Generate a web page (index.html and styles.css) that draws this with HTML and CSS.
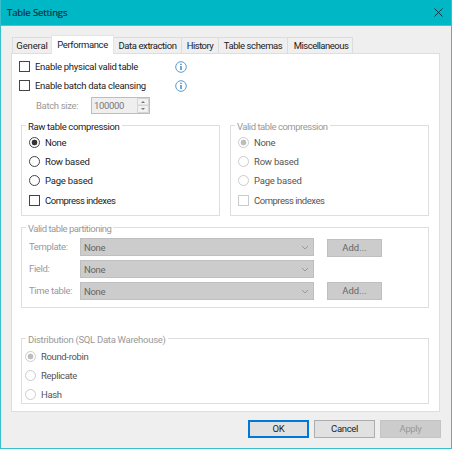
FILE: index.html
```html
<!DOCTYPE html>
<html lang="en">
<head>
<meta charset="utf-8">
<title>Table Settings</title>
<link rel="stylesheet" href="styles.css">
</head>
<body>
<main class="window">
  <header class="titlebar">
    <h1>Table Settings</h1>
    <svg class="close" viewBox="0 0 9 9"><path d="M.5.5l8 8M8.5.5l-8 8"/></svg>
  </header>
  <nav class="tabs">
    <span class="tab general"><b>General</b></span>
    <span class="tab active"><b>Performance</b></span>
    <span class="tab extraction"><b>Data extraction</b></span>
    <span class="tab history"><b>History</b></span>
    <span class="tab schemas"><b>Table schemas</b></span>
    <span class="tab misc"><b>Miscellaneous</b></span>
  </nav>
  <section class="panel">
    <div class="row top"><i class="check"></i><span class="label">Enable physical valid table</span>
      <svg class="info" viewBox="0 0 12 12"><circle cx="6" cy="6" r="5.3"/><path d="M6 5v4M6 2.7v1.3"/></svg></div>
    <div class="row top"><i class="check"></i><span class="label">Enable batch data cleansing</span>
      <svg class="info" viewBox="0 0 12 12"><circle cx="6" cy="6" r="5.3"/><path d="M6 5v4M6 2.7v1.3"/></svg></div>
    <div class="batch"><span class="muted size-label">Batch size:</span>
      <div class="spinner"><span>100000</span>
        <svg viewBox="0 0 12 15"><path class="key" d="M.5.5h11v6.5H.5zM.5 7.5h11v7H.5z"/><path class="arrow" d="M4 5l2-2 2 2zM4 10l2 2 2-2z"/></svg></div></div>
    <div class="pair">
      <section class="group compression">
        <h2>Raw table compression</h2>
        <div class="row"><i class="radio on"></i><span>None</span></div>
        <div class="row"><i class="radio"></i><span class="loose">Row based</span></div>
        <div class="row"><i class="radio"></i><span class="loose">Page based</span></div>
        <div class="row last"><i class="check"></i><span class="tight">Compress indexes</span></div>
      </section>
      <section class="group compression disabled">
        <h2 class="tight">Valid table compression</h2>
        <div class="row"><i class="radio on"></i><span>None</span></div>
        <div class="row"><i class="radio"></i><span class="loose">Row based</span></div>
        <div class="row"><i class="radio"></i><span class="loose">Page based</span></div>
        <div class="row last"><i class="check"></i><span class="tight">Compress indexes</span></div>
      </section>
    </div>
    <section class="group partition disabled">
      <h2 class="tight">Valid table partitioning</h2>
      <div class="field"><span class="muted">Template:</span><div class="combo"><span>None</span><svg viewBox="0 0 8 5"><path d="M1 1l3 3 3-3"/></svg></div><div class="button add">Add...</div></div>
      <div class="field"><span class="muted">Field:</span><div class="combo"><span>None</span><svg viewBox="0 0 8 5"><path d="M1 1l3 3 3-3"/></svg></div></div>
      <div class="field"><span class="muted">Time table:</span><div class="combo"><span>None</span><svg viewBox="0 0 8 5"><path d="M1 1l3 3 3-3"/></svg></div><div class="button add low">Add...</div></div>
    </section>
    <section class="group distribution disabled">
      <h2>Distribution (SQL Data Warehouse)</h2>
      <div class="row"><i class="radio on"></i><span>Round-robin</span></div>
      <div class="row"><i class="radio"></i><span>Replicate</span></div>
      <div class="row"><i class="radio"></i><span>Hash</span></div>
    </section>
  </section>
  <footer class="actions">
    <div class="button ok">OK</div>
    <div class="button">Cancel</div>
    <div class="button off">Apply</div>
  </footer>
</main>
</body>
</html>
```
FILE: styles.css
```css
* { box-sizing: border-box; }
body { margin: 0; background: #efefef; font: 9.5px/12px Roboto, "Liberation Sans", sans-serif; letter-spacing: -.35px; color: #222; white-space: nowrap; }
h1, h2 { margin: 0; font-weight: 400; }
i { display: block; flex: none; }
svg { display: block; flex: none; fill: none; }
.window { width: 452px; height: 449px; border: 1px solid #38bfcb; border-top: 0; background: #efefef; overflow: hidden; }
.titlebar { height: 26px; padding: 0 8px 0 6px; display: flex; justify-content: space-between; align-items: center; background: #00b7c6; border-bottom: 1px solid #43c6d0; }
.titlebar h1 { font: 9.5px/14px "Open Sans", "Noto Sans", sans-serif; color: #062f36; -webkit-text-stroke: .2px #062f36; letter-spacing: -.1px; }
.close { width: 9px; height: 9px; stroke: #123; stroke-width: .9; }

.tabs { display: flex; align-items: flex-end; height: 27px; padding-left: 11px; }
.tab { height: 16px; border: 1px solid #dcdcdc; border-width: 1px 1px 0 0; display: flex; justify-content: center; align-items: center; padding-top: 1px; letter-spacing: -.4px; }
.tab b { font-weight: 400; }
.general { width: 39px; border-left-width: 1px; border-right: 0; letter-spacing: -.15px; }
.active { width: 63px; height: 19px; background: #fff; margin-bottom: -1px; position: relative; border-color: #e4e4e4; border-left-width: 1px; padding-bottom: 2px; }
.extraction { width: 68px; }
.history { width: 37px; letter-spacing: -.55px; }
.schemas { width: 69px; }
.misc { width: 65px; letter-spacing: -.5px; }
.misc b { padding-left: 2px; }

.panel { margin-left: 10px; width: 429px; height: 359px; padding: 3px 9px 0 7px; background: #fff; border: 1px solid #dedede; }
.row { height: 19px; display: flex; align-items: center; }
.check { width: 11px; height: 11px; border: 1px solid #444; background: #fff; }
.radio { width: 11px; height: 11px; border: 1px solid #444; border-radius: 50%; background: #fff; }
.radio.on { background: radial-gradient(circle, #333 0 2.6px, #fff 3.2px); }
.tight { letter-spacing: -.48px; }
.loose { letter-spacing: -.2px; }
.label { width: 140px; margin-left: 5px; letter-spacing: -.29px; }
.info { width: 12px; height: 12px; stroke: #5b9bcb; stroke-width: 1; }
.info path { stroke: #2878b5; stroke-width: 1.3; }
.muted { color: #999; }
.batch { display: flex; height: 17px; margin-top: 2px; align-items: center; padding-left: 17px; }
.size-label { width: 55px; }
.spinner { width: 59px; height: 17px; border: 1px solid #bdbdbd; background: #efefef; color: #777; display: flex; justify-content: space-between; align-items: center; padding-left: 2px; }
.spinner svg { width: 12px; height: 15px; }
.key { stroke: #d4d4d4; fill: #f1f1f1; }
.arrow { fill: #777; }

.pair { display: flex; gap: 10px; padding: 11px 0 0 2px; }
.group { border: 1px solid #dedede; }
.group h2 { width: max-content; height: 12px; margin: -6px 0 0 4px; padding: 0 2px; background: #fff; font-size: 9.5px; line-height: 13px; }
.compression { width: 199px; height: 91px; }
.compression .row { padding-left: 7px; gap: 5px; }
.compression h2 + .row { margin-top: 1px; }
.compression .last { height: 21px; }
.disabled h2 { color: #999; }
.disabled .row { color: #555; }
.disabled .check, .disabled .radio { border-color: #ccc; }
.disabled .radio.on { background: radial-gradient(circle, #bdbdbd 0 2.6px, #fff 3.2px); }
.partition { width: 408px; height: 81px; margin: 11px 0 0 2px; }
.partition h2 { margin-bottom: 4px; }
.field { display: flex; align-items: flex-start; height: 22px; padding-left: 7px; }
.field .muted { width: 51px; padding-top: 3px; }
.combo { width: 234px; height: 18px; padding: 1px 4px 0 3px; border: 1px solid #bfbfbf; background: #ccc; color: #666; display: flex; justify-content: space-between; align-items: center; }
.combo svg { width: 8px; height: 5px; stroke: #999; }
.button { width: 61px; height: 18px; display: flex; align-items: center; justify-content: center; border: 1px solid #adadad; background: #e1e1e1; color: #222; }
.button.add { width: 55px; margin: 1px 0 0 13px; border-color: #bfbfbf; background: #ccc; color: #666; letter-spacing: 0; }
.button.add.low { margin-top: 0; }
.distribution { width: 408px; height: 66px; margin: 30px 0 0 2px; }
.distribution h2 { letter-spacing: -.28px; }
.distribution .row { padding-left: 3px; gap: 5px; }
.distribution h2 + .row { margin-top: 2px; }

.actions { display: flex; justify-content: flex-end; gap: 5px; padding: 8px 10px 0 0; }
.button.ok { border: 2px solid #0078d7; }
.button.off { background: #ccc; border-color: #c4c4c4; color: #999; }
```
